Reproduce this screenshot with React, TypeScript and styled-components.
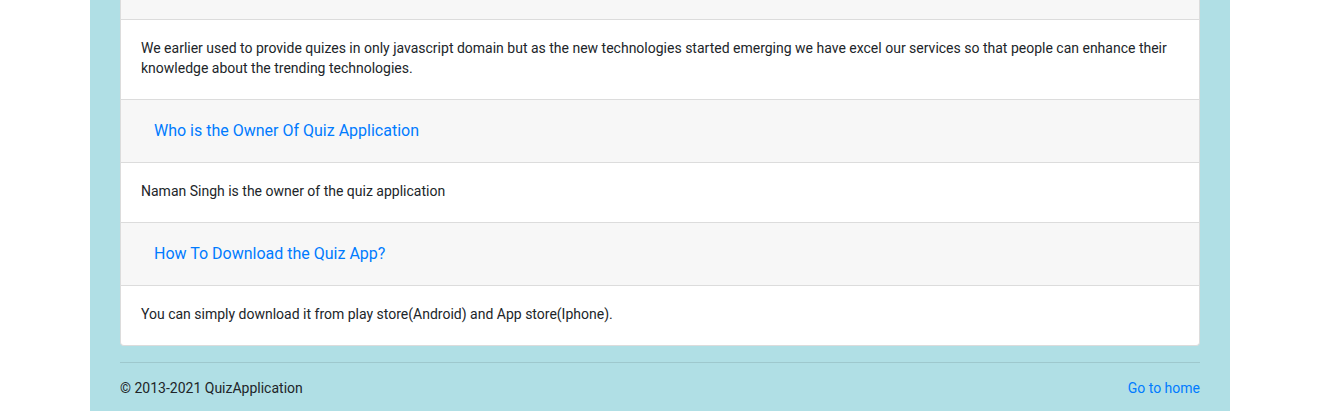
import React from "react";
import styled, { createGlobalStyle } from "styled-components";

const faqs = [
  {
    q: "Who is the Owner Of Quiz Application",
    a: "Naman Singh is the owner of the quiz application",
  },
  {
    q: "How To Download the Quiz App?",
    a: "You can simply download it from play store(Android) and App store(Iphone).",
  },
];

const App: React.FC = () => {
  return (
    <Page>
      <GlobalStyle />
      <Container>
        <Accordion>
          <Header $stub />
          <Body>
            We earlier used to provide quizes in only javascript domain but as the new
            technologies started emerging we have excel our services so that people can
            enhance their knowledge about the trending technologies.
          </Body>
          {faqs.map((f, i) => (
            <React.Fragment key={f.q}>
              <Header>
                <Toggle>{f.q}</Toggle>
              </Header>
              <Body $last={i === faqs.length - 1}>{f.a}</Body>
            </React.Fragment>
          ))}
        </Accordion>
        <Rule />
        <Footer>
          <span>© 2013-2021 QuizApplication</span>
          <HomeLink href="#">Go to home</HomeLink>
        </Footer>
      </Container>
    </Page>
  );
};

const GlobalStyle = createGlobalStyle`
  * { box-sizing: border-box; }
  body {
    margin: 0;
    background: #fff;
    font-family: Roboto, "Liberation Sans", sans-serif;
    color: #212529;
    overflow: hidden;
  }
`;

const Page = styled.div`
  padding-right: 12px;
`;

const Container = styled.div`
  width: 1140px;
  margin: 0 auto;
  background: #b0dfe5;
  padding: 0 30px 13px;
`;

const Accordion = styled.div`
  background: #fff;
  border: 1px solid #dcdcdc;
  border-top: 0;
  border-radius: 0 0 4px 4px;
  overflow: hidden;
`;

const Header = styled.div<{ $stub?: boolean }>`
  background: #f7f7f7;
  border-bottom: 1px solid #dcdcdc;
  padding: ${(p) => (p.$stub ? "0" : "12px 20px")};
  height: ${(p) => (p.$stub ? "20px" : "63px")};
`;

const Toggle = styled.button`
  background: none;
  border: 1px solid transparent;
  padding: 6px 12px;
  font-family: inherit;
  font-size: 16px;
  line-height: 24px;
  color: #007bff;
  cursor: pointer;
`;

const Body = styled.div<{ $last?: boolean }>`
  padding: 18px 20px 21px;
  font-size: 14px;
  line-height: 20px;
  border-bottom: ${(p) => (p.$last ? "0" : "1px solid #dcdcdc")};
`;

const Rule = styled.hr`
  margin: 16px 0 0;
  border: 0;
  border-top: 1px solid rgba(0, 0, 0, 0.1);
`;

const Footer = styled.footer`
  display: flex;
  justify-content: space-between;
  align-items: center;
  padding-top: 15px;
  font-size: 14px;
  line-height: 20px;
`;

const HomeLink = styled.a`
  color: #007bff;
  text-decoration: none;
`;

export default App;
